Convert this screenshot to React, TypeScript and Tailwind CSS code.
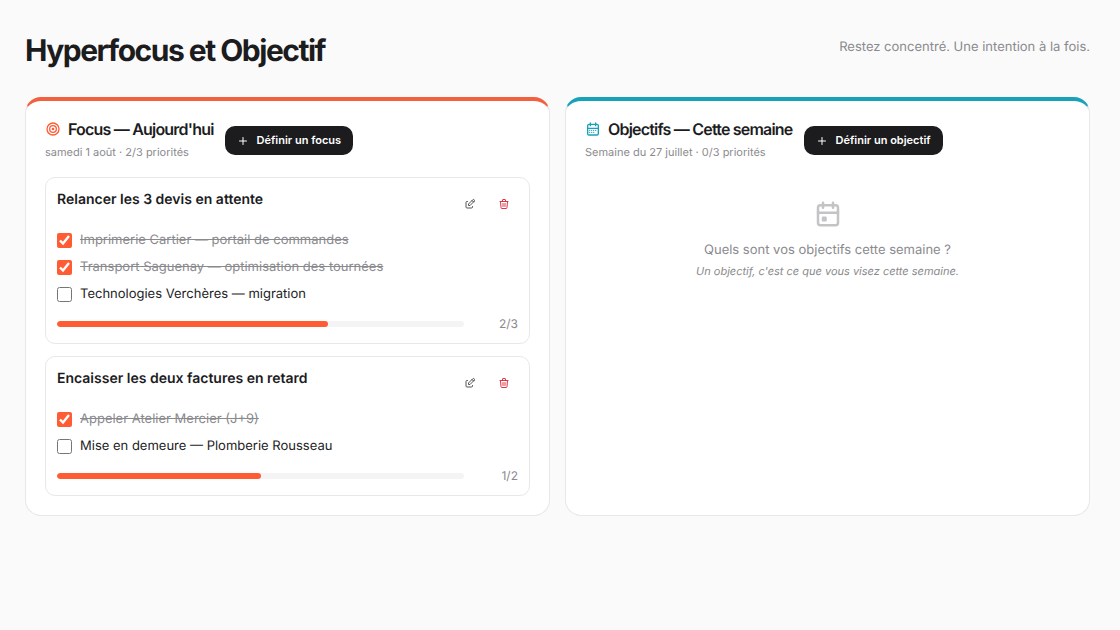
import { useState } from "react";
import type { ReactNode } from "react";
import { TbCalendarEvent, TbCalendarMonth, TbEdit, TbPlus, TbTarget, TbTrash } from "react-icons/tb";

interface Step {
  label: string;
  done: boolean;
}

interface Focus {
  id: string;
  title: string;
  steps: Step[];
}

const initialFocuses: Focus[] = [
  {
    id: "devis",
    title: "Relancer les 3 devis en attente",
    steps: [
      { label: "Imprimerie Cartier — portail de commandes", done: true },
      { label: "Transport Saguenay — optimisation des tournées", done: true },
      { label: "Technologies Verchères — migration", done: false },
    ],
  },
  {
    id: "factures",
    title: "Encaisser les deux factures en retard",
    steps: [
      { label: "Appeler Atelier Mercier (J+9)", done: true },
      { label: "Mise en demeure — Plomberie Rousseau", done: false },
    ],
  },
];

interface PanelProps {
  icon: ReactNode;
  title: string;
  subtitle: string;
  action: string;
  accent: string;
  children: ReactNode;
}

function Panel({ icon, title, subtitle, action, accent, children }: PanelProps) {
  return (
    <section className={`rounded-2xl border border-t-4 border-[#e8e8ea] bg-white p-[19px] ${accent}`}>
      <div className="mb-4 flex items-center gap-[11px]">
        <div>
          <h2 className="flex items-center gap-[7px] text-base leading-[18px] font-semibold tracking-tighter text-[#1c1c1e]">
            {icon}
            {title}
          </h2>
          <p className="mt-[5px] text-[11px] leading-[18px] text-[#8a8a8e]">{subtitle}</p>
        </div>
        <button
          type="button"
          className="flex h-[29px] items-center gap-2 rounded-[10px] bg-[#1c1c1e] px-3 text-[11px] font-semibold text-white"
        >
          <TbPlus size={12} />
          {action}
        </button>
      </div>
      {children}
    </section>
  );
}

function FocusCard({ focus, onToggle }: { focus: Focus; onToggle: (index: number) => void }) {
  const done = focus.steps.filter((s) => s.done).length;
  const total = focus.steps.length;

  return (
    <article className="rounded-[10px] border border-[#e8e8ea] p-[11px]">
      <div className="flex items-start justify-between">
        <h3 className="text-sm leading-[22px] font-semibold text-[#1c1c1e]">{focus.title}</h3>
        <div className="flex gap-[5px]">
          <button type="button" aria-label="Modifier" className="flex h-[29px] w-[29px] items-center justify-center text-[#55555a]">
            <TbEdit size={12} />
          </button>
          <button type="button" aria-label="Supprimer" className="flex h-[29px] w-[29px] items-center justify-center text-[#dc3545]">
            <TbTrash size={12} />
          </button>
        </div>
      </div>

      <div className="mt-[11px] flex flex-col gap-[5px]">
        {focus.steps.map((step, i) => (
          <label key={step.label} className="flex items-center gap-2 text-[13px] leading-[22px]">
            <input
              type="checkbox"
              checked={step.done}
              onChange={() => onToggle(i)}
              className="size-[15px] shrink-0 accent-[#ff5c35]"
            />
            <span className={step.done ? "text-[#8a8a8e] line-through" : "text-[#1c1c1e]"}>{step.label}</span>
          </label>
        ))}
      </div>

      {/* Progress */}
      <div className="mt-2.5 flex items-center gap-2.5">
        <div className="h-1.5 flex-1 overflow-hidden rounded-full bg-[#f4f4f5]">
          <div className="h-full rounded-full bg-[#ff5c35]" style={{ width: `${(done / total) * 100}%` }} />
        </div>
        <span className="w-11 text-right text-xs leading-[17px] text-[#8a8a8e]">
          {done}/{total}
        </span>
      </div>
    </article>
  );
}

export default function App() {
  const [focuses, setFocuses] = useState(initialFocuses);

  const toggle = (id: string, index: number) => {
    setFocuses((prev) =>
      prev.map((f) =>
        f.id === id ? { ...f, steps: f.steps.map((s, i) => (i === index ? { ...s, done: !s.done } : s)) } : f,
      ),
    );
  };

  return (
    <main className="min-h-screen bg-[#fafafa] pt-[33px] pr-[30px] pb-8 pl-[25px] font-['Inter',sans-serif] antialiased [text-rendering:geometricPrecision]">
      <header className="mb-7 flex items-start justify-between">
        <h1 className="text-3xl leading-9 font-bold tracking-tighter text-[#1c1c1e]">Hyperfocus et Objectif</h1>
        <p className="mt-1 text-[13px] leading-5 text-[#8a8a8e]">Restez concentré. Une intention à la fois.</p>
      </header>

      <div className="grid grid-cols-2 gap-[15px]">
        <Panel
          icon={<TbTarget size={16} className="text-[#ff5c35]" />}
          title="Focus — Aujourd'hui"
          subtitle="samedi 1 août · 2/3 priorités"
          action="Définir un focus"
          accent="border-t-[#f2603f]"
        >
          <div className="flex flex-col gap-3">
            {focuses.map((focus) => (
              <FocusCard key={focus.id} focus={focus} onToggle={(i) => toggle(focus.id, i)} />
            ))}
          </div>
        </Panel>

        <Panel
          icon={<TbCalendarMonth size={16} className="text-[#17a2b8]" />}
          title="Objectifs — Cette semaine"
          subtitle="Semaine du 27 juillet · 0/3 priorités"
          action="Définir un objectif"
          accent="border-t-[#17a2b8]"
        >
          {/* Empty state */}
          <div className="flex flex-col items-center pt-[22px] text-center text-[#8a8a8e]">
            <TbCalendarEvent size={30} className="text-[#c4c4c6]" />
            <p className="mt-[11px] text-[13px] leading-5">Quels sont vos objectifs cette semaine ?</p>
            <p className="mt-0.5 text-[11px] leading-[18px] italic">Un objectif, c'est ce que vous visez cette semaine.</p>
          </div>
        </Panel>
      </div>
    </main>
  );
}
